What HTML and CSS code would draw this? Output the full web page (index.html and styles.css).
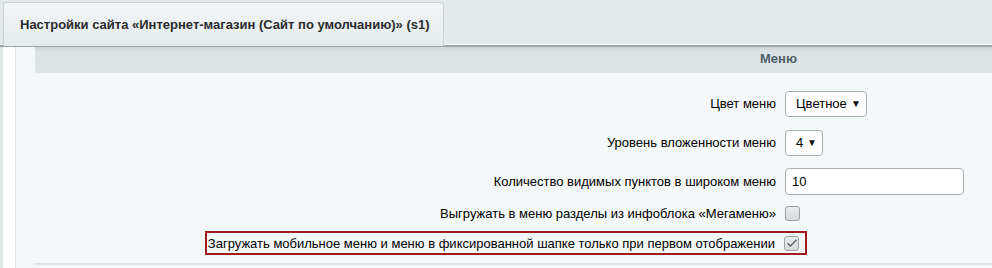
FILE: index.html
```html
<!DOCTYPE html>
<html lang="ru">
<head>
    <meta charset="UTF-8">
    <title>Настройки сайта</title>
    <link rel="stylesheet" href="styles.css">
</head>
<body>
    <div class="tabs">
        <div class="tab">Настройки сайта «Интернет-магазин (Сайт по умолчанию)» (s1)</div>
    </div>
    <div class="page">
        <div class="side"></div>
        <div class="content">
            <div class="section-title">Меню</div>
            <div class="form">
                <div class="row row-select">
                    <div class="label">Цвет меню</div>
                    <div class="field">
                        <span class="select select-color">Цветное<span class="arrow">▼</span></span>
                    </div>
                </div>
                <div class="row row-select">
                    <div class="label">Уровень вложенности меню</div>
                    <div class="field">
                        <span class="select select-level">4<span class="arrow">▼</span></span>
                    </div>
                </div>
                <div class="row row-input">
                    <div class="label">Количество видимых пунктов в широком меню</div>
                    <div class="field">
                        <span class="text-input">10</span>
                    </div>
                </div>
                <div class="row row-check">
                    <div class="label">Выгружать в меню разделы из инфоблока «Мегаменю»</div>
                    <div class="field">
                        <span class="checkbox"></span>
                    </div>
                </div>
                <div class="row-marked">
                    <div class="marked">
                        <span class="label">Загружать мобильное меню и меню в фиксированной шапке только при первом отображении</span>
                        <span class="checkbox checked">
                            <svg width="12" height="10" viewBox="0 0 12 10"><path d="M1.5 5.2 L4.5 8 L10.5 1.8" fill="none" stroke="#5b6266" stroke-width="1.3"/></svg>
                        </span>
                    </div>
                </div>
            </div>
            <div class="bottom-line"></div>
        </div>
    </div>
</body>
</html>
```

FILE: styles.css
```css
* {
    margin: 0;
    padding: 0;
    box-sizing: border-box;
}

body {
    font-family: 'Liberation Sans', Arial, sans-serif;
    font-size: 13px;
    color: #000;
    background: #e2e8ea;
    width: 992px;
    height: 268px;
    overflow: hidden;
}

.tabs {
    height: 47px;
    padding: 2px 0 0 3px;
    background: #e4eaec;
    border-bottom: 2px solid #9ea5a8;
    box-shadow: inset 0 -7px 0 -6px #ffffff;
}

.tab {
    width: 441px;
    height: 44px;
    padding: 14px 0 0 16px;
    border: 1px solid #c9d0d3;
    border-bottom: none;
    border-radius: 3px 3px 0 0;
    background: linear-gradient(#f2f5f6, #e6ecee);
    font-weight: bold;
    color: #2b2b2b;
    position: relative;
    z-index: 1;
}

.page {
    display: flex;
    height: 221px;
}

.side {
    width: 16px;
    background: #ffffff;
    border-left: 3px solid #dfe6e8;
    border-right: 1px solid #dce3e5;
}

.content {
    flex: 1;
    background: #f5f8f9;
    padding-left: 19px;
}

.section-title {
    height: 26px;
    padding: 4px 0 0 725px;
    background: linear-gradient(#cfd6d8, #dce3e5 5px, #dde4e6);
    font-weight: bold;
    color: #4b6166;
}

.form {
    padding-top: 11px;
}

.row {
    display: flex;
    align-items: center;
}

.row-select {
    height: 39px;
}

.row-input {
    height: 38px;
}

.row-check {
    height: 26px;
}

.row .label {
    width: 741px;
    text-align: right;
}

.field {
    padding-left: 9px;
    display: flex;
    align-items: center;
}

.select {
    display: flex;
    align-items: center;
    height: 26px;
    padding-left: 10px;
    background: #ffffff;
    border: 1px solid #a8afb3;
    border-radius: 4px;
}

.select-color {
    width: 82px;
}

.select-level {
    width: 38px;
}

.arrow {
    font-size: 10px;
    margin-left: auto;
    margin-right: 5px;
    color: #111;
}

.text-input {
    display: flex;
    align-items: center;
    width: 179px;
    height: 27px;
    padding-left: 6px;
    background: #ffffff;
    border: 1px solid #a8afb3;
    border-radius: 4px;
}

.checkbox {
    display: inline-flex;
    align-items: center;
    justify-content: center;
    width: 15px;
    height: 15px;
    border: 1px solid #9ba2a6;
    border-radius: 3px;
    background: linear-gradient(#e9eced, #d5dadc);
}

.row-marked {
    display: flex;
    justify-content: flex-end;
    padding-right: 185px;
    margin-top: 5px;
}

.marked {
    display: flex;
    align-items: center;
    height: 24px;
    padding: 0 6px 0 1px;
    border: 2px solid #a01c1f;
}

.marked .label {
    margin-right: 9px;
}

.bottom-line {
    margin-top: 8px;
    height: 2px;
    background: #dde3e5;
}
```
